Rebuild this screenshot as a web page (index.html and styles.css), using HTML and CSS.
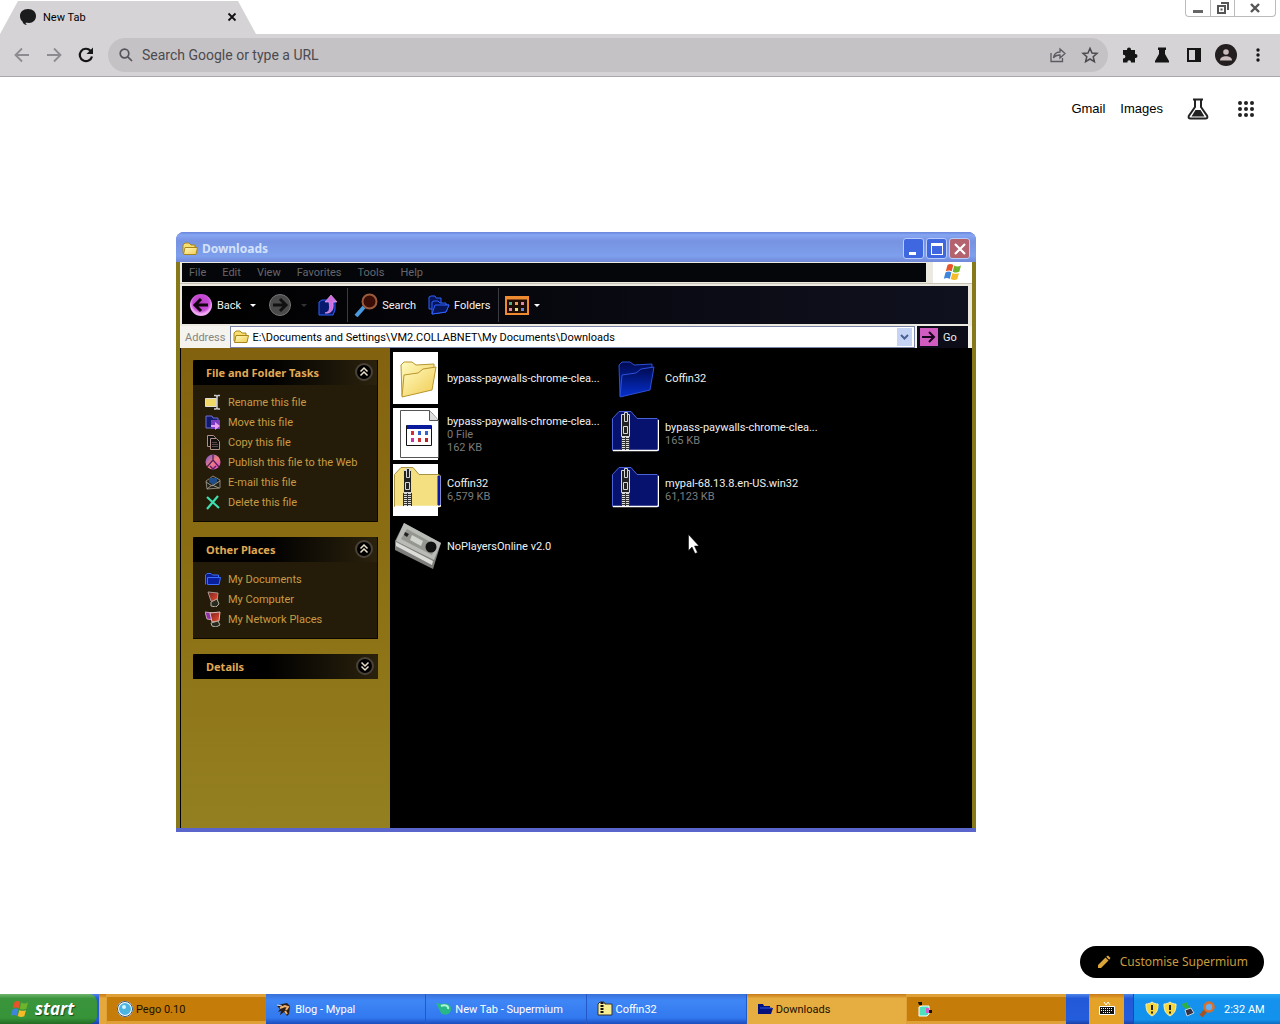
FILE: index.html
```html
<!DOCTYPE html>
<html lang="en">
<head>
<meta charset="utf-8">
<title>New Tab - Supermium</title>
<link rel="stylesheet" href="styles.css">
</head>
<body>
<svg class="defs" aria-hidden="true">
  <defs>
    <linearGradient id="gYellow" x1="0" y1="0" x2="1" y2="1"><stop offset="0" stop-color="#fffbc0"/><stop offset="1" stop-color="#f0ca50"/></linearGradient>
    <linearGradient id="gBlue" x1="0" y1="0" x2="0" y2="1"><stop offset="0" stop-color="#000a50"/><stop offset="1" stop-color="#0630d0"/></linearGradient>
    <radialGradient id="gPink" cx=".5" cy=".4"><stop offset="0" stop-color="#b93ac4"/><stop offset=".75" stop-color="#c84cd6"/><stop offset="1" stop-color="#f0a8f4"/></radialGradient>
    <linearGradient id="gWeb" x1="0" y1="0" x2="1" y2="1"><stop offset="0" stop-color="#6a50d8"/><stop offset=".5" stop-color="#f08080"/><stop offset="1" stop-color="#e040e0"/></linearGradient>
    <linearGradient id="gRed" x1="0" y1="0" x2="1" y2="1"><stop offset="0" stop-color="#7a2020"/><stop offset="1" stop-color="#f05030"/></linearGradient>
  </defs>
  <symbol id="flag" viewBox="0 0 20 20">
    <path fill="#e8532a" d="M4.500 3C6.500 1.600 8.500 1.800 10.300 3L8.700 9.300C7 8.200 5 8.200 2.800 9.300z"/>
    <path fill="#6fb52c" d="M11.300 3.500C13.500 4.700 15.500 4.700 18 3.400L16.300 9.800C14 11 11.800 10.800 9.700 9.700z"/>
    <path fill="#3e86dc" d="M2.500 10.400C4.500 9.300 6.700 9.300 8.400 10.500L6.700 17C5 15.800 3 15.700 .8 16.800z"/>
    <path fill="#f6bc28" d="M9.400 10.900C11.500 12.100 13.700 12.200 16 11L14.300 17.300C12 18.500 9.800 18.300 7.700 17.100z"/>
  </symbol>
  <symbol id="folderS" viewBox="0 0 16 16">
    <path d="M1 12V4l2-2h4l2 2h4v4z" fill="#f8e070" stroke="#a8861c"/>
    <path d="M1.500 13.500L3 6.500h12.500l-1.500 7z" fill="url(#gYellow)" stroke="#a8861c"/>
  </symbol>
  <symbol id="folderB" viewBox="0 0 16 16">
    <path d="M.5 13.500V4L2 2.500h4L7.500 4h6v2" fill="#0a1c90" stroke="#3c6cff"/>
    <path d="M2.500 13.500V6.500h13l-1.500 7z" fill="#0a1f9c" stroke="#3c6cff"/>
  </symbol>
  <symbol id="folderBig" viewBox="0 0 48 48">
    <path d="M8 11l3-3h8l4 3 18-1v6L38 34 9 42z"/>
    <path d="M11 21l14-2 5-4 13-2-4 23L9 43z"/>
  </symbol>
  <symbol id="zip" viewBox="-1 0 48 48">
    <path d="M.5 40.500V8.500L7 1.500h12L25 8.500h20l2 2v30z"/>
    <path d="M1 40.500h44l1.500-1V10" fill="none" stroke="#fff" stroke-width="1.500"/>
    <g fill="#222" stroke="#d8d8d8"><path d="M9.500 4.500h8v22h-8z"/><path d="M12.500 2.500h3v9h-3zM11.500 16.500h4v7h-4z"/></g>
    <path d="M9 27h9v13H9z" fill="#333" stroke="none"/>
    <path d="M11.500 27v13M15.500 27v13" stroke="#ddd" stroke-width="3" stroke-dasharray="1 1"/>
  </symbol>
  <symbol id="up2" viewBox="0 0 18 18"><circle cx="9" cy="9" r="8" fill="#000" stroke="#4a4238" stroke-width="2"/><path d="M5.500 8.500L9 5l3.500 3.500M5.500 12.500L9 9l3.500 3.500" fill="none" stroke="#eadfca" stroke-width="1.500"/></symbol>
  <symbol id="shield" viewBox="0 0 14 16"><path d="M7 1c2 1.500 4 2 6 2 0 6-1 9-6 12C2 12 1 9 1 3c2 0 4-.5 6-2z" fill="#f5d63c" stroke="#f8f0b0"/><path d="M7 4v5M7 10.500v2" stroke="#222" stroke-width="2"/></symbol>
</svg>

<div class="desktop">
  <header class="tabstrip">
    <div class="tab">
      <svg width="18" height="18" viewBox="0 0 18 18"><path d="M9 1c5 0 8 3 8 7s-3 7-7 7c-1.500 0-3-.3-3.500 0 .3 1 .8 1.600 1.500 2C5.500 17 4 15.500 3.500 13.500 2 12.500 1 10.500 1 8c0-4 3-7 8-7z" fill="#1b1a1c"/></svg>
      <span class="tab-title">New Tab</span>
      <button class="plain" aria-label="Close tab"><svg width="10" height="10" viewBox="0 0 10 10"><path d="M1.500 1.500l7 7M8.500 1.500l-7 7" stroke="#111" stroke-width="1.800"/></svg></button>
    </div>
    <div class="wincontrols">
      <button aria-label="Minimise"><svg width="12" height="12" viewBox="0 0 12 12"><path d="M1 8h10v3H1z" fill="#666"/></svg></button>
      <button aria-label="Restore"><svg width="12" height="12" viewBox="0 0 12 12" fill="none" stroke="#555" stroke-width="2"><path d="M1 4h7v7H1zM4 1h7v7M3.500 7.500h2"/></svg></button>
      <button aria-label="Close"><svg width="12" height="12" viewBox="0 0 12 12"><path d="M2 2l8 8M10 2l-8 8" stroke="#555" stroke-width="2.400"/></svg></button>
    </div>
  </header>

  <nav class="toolbar" aria-label="Browser">
    <div class="tools">
      <button class="plain" aria-label="Back"><svg width="18" height="18" viewBox="0 0 18 18" fill="none" stroke="#8d8b8f" stroke-width="1.800"><path d="M16 9H3M9 2.500L2.500 9 9 15.500"/></svg></button>
      <button class="plain" aria-label="Forward"><svg width="18" height="18" viewBox="0 0 18 18" fill="none" stroke="#8d8b8f" stroke-width="1.800"><path d="M2 9h13M9 2.500L15.500 9 9 15.500"/></svg></button>
      <button class="plain" aria-label="Reload"><svg width="18" height="18" viewBox="0 0 18 18"><path d="M15 10.500A6.200 6.200 0 1 1 13.500 4.700L15 6.300" fill="none" stroke="#151515" stroke-width="2.200"/><path d="M16 1.500V8H9.500z" fill="#151515"/></svg></button>
    </div>
    <div class="omnibox">
      <svg width="16" height="16" viewBox="0 0 16 16" fill="none" stroke="#55545a" stroke-width="1.700"><circle cx="6.500" cy="6.500" r="4.300"/><path d="M9.800 9.800L14 14"/></svg>
      <input type="text" aria-label="Address" placeholder="Search Google or type a URL">
      <button class="plain" aria-label="Share"><svg width="18" height="18" viewBox="0 0 18 18" fill="none" stroke="#5c5a60" stroke-width="1.300"><path d="M2 7v8.500h11.500V12M4.500 12c.5-4 3-6 6.500-6V3l5 4.500-5 4.500V9C8.500 9 6 9.500 4.500 12z"/></svg></button>
      <button class="plain" aria-label="Bookmark"><svg width="18" height="18" viewBox="0 0 18 18" fill="none" stroke="#4d4b50" stroke-width="1.500"><path d="M9 2.300l2 4.700 5 .4-3.800 3.300 1.200 5L9 13l-4.400 2.700 1.200-5L2 7.400 7 7z"/></svg></button>
    </div>
    <div class="tools">
      <button class="plain" aria-label="Extensions"><svg width="18" height="18" viewBox="0 0 18 18" fill="#151515"><path d="M6 3.500a2 2 0 0 1 4 0V4h4v4h.5a2 2 0 0 1 0 4H14v4.500h-4V16a1.800 1.800 0 0 0-3.600 0v.5H2v-4h.5a1.900 1.900 0 0 0 0-3.800H2V4h4z"/></svg></button>
      <button class="plain" aria-label="Labs"><svg width="18" height="18" viewBox="0 0 18 18" fill="#151515"><path d="M5 1.500h8V4h-1v4l4 7v1.500H2V15l4-7V4H5z"/></svg></button>
      <button class="plain" aria-label="Side panel"><svg width="18" height="18" viewBox="0 0 18 18" fill="#151515"><path fill-rule="evenodd" d="M2 2h14v14H2zm2 2v10h6V4z"/></svg></button>
      <button class="plain" aria-label="Profile"><svg width="22" height="22" viewBox="0 0 22 22"><circle cx="11" cy="11" r="11" fill="#231f20"/><circle cx="11" cy="8" r="2.800" fill="#c9bcbc"/><path d="M5 16.500c0-3 3-4.300 6-4.300s6 1.300 6 4.300z" fill="#c9bcbc"/></svg></button>
      <button class="plain" aria-label="Menu"><svg width="18" height="18" viewBox="0 0 18 18" fill="#151515"><circle cx="9" cy="4" r="1.700"/><circle cx="9" cy="9" r="1.700"/><circle cx="9" cy="14" r="1.700"/></svg></button>
    </div>
  </nav>

  <main class="newtab">
    <div class="google">
      <a href="#">Gmail</a>
      <a href="#">Images</a>
      <button class="plain big" aria-label="Search Labs"><svg width="22" height="22" viewBox="0 0 22 22"><path d="M6 1.500h10M8 1.500v7.500L1.800 18q-.8 2.500 1.700 2.500h15q2.500 0 1.700-2.500L14 9V1.500" fill="none" stroke="#222" stroke-width="2"/><path d="M8.500 12h5l4 6.500h-13z" fill="#222"/></svg></button>
      <button class="plain big" aria-label="Google apps"><svg width="18" height="18" viewBox="0 0 18 18" fill="#222"><circle cx="3" cy="3" r="2"/><circle cx="9" cy="3" r="2"/><circle cx="15" cy="3" r="2"/><circle cx="3" cy="9" r="2"/><circle cx="9" cy="9" r="2"/><circle cx="15" cy="9" r="2"/><circle cx="3" cy="15" r="2"/><circle cx="9" cy="15" r="2"/><circle cx="15" cy="15" r="2"/></svg></button>
    </div>
    <button class="customise"><svg width="16" height="16" viewBox="0 0 16 16" fill="#dba53c"><path d="M2 14v-3l7.500-7.500 3 3L5 14zM10.200 2.800L12 1.500 14.500 4l-1.300 1.800z"/></svg>Customise Supermium</button>
  </main>

  <section class="explorer" aria-label="Downloads">
    <div class="titlebar">
      <svg width="16" height="16"><use href="#folderS"/></svg>
      <h1>Downloads</h1>
      <button class="cap" aria-label="Minimise"><svg width="18" height="18" viewBox="0 0 18 18"><path d="M4 12h7v3H4z" fill="#fff"/></svg></button>
      <button class="cap" aria-label="Maximise"><svg width="18" height="18" viewBox="0 0 18 18"><path fill-rule="evenodd" fill="#fff" d="M3 3h12v12H3zm1 3v8h10V6z"/></svg></button>
      <button class="cap close" aria-label="Close"><svg width="18" height="18" viewBox="0 0 18 18"><path d="M4 4l10 10M14 4L4 14" stroke="#fff" stroke-width="2.200"/></svg></button>
    </div>
    <div class="frame">
      <div class="menurow">
        <div class="menubar">
          <button>File</button><button>Edit</button><button>View</button><button>Favorites</button><button>Tools</button><button>Help</button>
        </div>
        <div class="throbber"><svg width="20" height="20"><use href="#flag"/></svg></div>
      </div>
      <div class="xtools">
        <button><svg width="24" height="24" viewBox="0 0 24 24"><circle cx="12" cy="12" r="11" fill="url(#gPink)"/><path d="M19 12H7M12 6l-6 6 6 6" fill="none" stroke="#10040f" stroke-width="3"/></svg>Back<svg class="caret" width="6" height="3" viewBox="0 0 6 3"><path d="M0 0h6L3 3z" fill="#fff"/></svg></button>
        <button class="fwd" aria-label="Forward"><svg width="24" height="24" viewBox="0 0 24 24"><circle cx="12" cy="12" r="10.500" fill="#4a4a4a" stroke="#777"/><path d="M5 12h12M12 6l6 6-6 6" fill="none" stroke="#111" stroke-width="3"/></svg><svg class="caret" width="6" height="3" viewBox="0 0 6 3"><path d="M0 0h6L3 3z" fill="#333"/></svg></button>
        <button class="up" aria-label="Up"><svg width="22" height="24" viewBox="0 0 22 24"><path d="M2 22V9l3-2h5l2 2h6v8l-2 5z" fill="#081a70" stroke="#2e62ff"/><path d="M8 20c5-1 5-5 4-11H8l6-7 6 7h-4c1 7-1 12-8 11z" fill="#d070e0" stroke="#f0b0f4" stroke-width=".6"/></svg></button>
        <button class="sep"><svg width="24" height="24" viewBox="0 0 24 24"><path d="M2 23l8-9" stroke="#4a9ae0" stroke-width="4"/><circle cx="15.500" cy="8.500" r="7" fill="#3a0e06" stroke="#9a5a3c" stroke-width="2"/></svg>Search</button>
        <button class="folders"><svg width="22" height="22" viewBox="0 0 22 22" fill="#06145a" stroke="#2e62ff"><path d="M1 15V3l2-1h4l1 2h5v11z"/><path d="M4 20V8l2-1h4l2 2h6v2h3l-3 7z"/><path d="M4 20l3-9h14l-3 7z"/></svg>Folders</button>
        <button class="sep views" aria-label="Views"><svg width="24" height="20" viewBox="0 0 24 20"><path d="M1 2h22v17H1z" fill="#1c0c04" stroke="#f08a30" stroke-width="2"/><path d="M1 3h22" stroke="#f08a30" stroke-width="3"/><g fill="#d8a"><path d="M4 7h3v3H4z" fill="#5a8"/><path d="M10 7h3v3h-3z" fill="#e95"/><path d="M16 7h3v3h-3zM4 13h3v3H4z"/><path d="M10 13h3v3h-3z" fill="#dd8"/><path d="M16 13h3v3h-3z" fill="#68d"/></g></svg><svg class="caret" width="6" height="3" viewBox="0 0 6 3"><path d="M0 0h6L3 3z" fill="#fff"/></svg></button>
      </div>
      <div class="address">
        <label for="path">Address</label>
        <div class="field">
          <svg width="16" height="16"><use href="#folderS"/></svg>
          <input id="path" type="text" value="E:\Documents and Settings\VM2.COLLABNET\My Documents\Downloads">
          <button class="drop" aria-label="Show addresses"><svg width="9" height="6" viewBox="0 0 9 6"><path d="M1 1l3.500 3.500L8 1" fill="none" stroke="#4a6296" stroke-width="2"/></svg></button>
        </div>
        <button class="go"><svg width="18" height="18" viewBox="0 0 18 18"><path d="M0 0h18v18H0z" fill="#d05cc0"/><path d="M2 9h12M9 4l5 5-5 5" fill="none" stroke="#16041a" stroke-width="2"/></svg>Go</button>
      </div>
      <div class="panes">
        <aside class="side">
          <section class="panel">
            <header><h2>File and Folder Tasks</h2><svg width="18" height="18"><use href="#up2"/></svg></header>
            <ul>
              <li><svg width="16" height="16" viewBox="0 0 16 16"><path d="M.5 4.500h11v8H.5z" fill="#f0d868" stroke="#ddd"/><path d="M9 1.500h2l1 1 1-1h2M12 2v12M9 15h2l1-1 1 1h2" stroke="#ccc" fill="none" stroke-width="1.500"/></svg><a href="#">Rename this file</a></li>
              <li><svg width="16" height="16" viewBox="0 0 16 16"><path d="M1 2h6l1 2h5v10H1z" fill="#121a70" stroke="#7070d0"/><path d="M6 6h9v9H6z" fill="#7a3cc0"/><path d="M6 11h4V8l5 4-5 4v-3H6z" fill="#e8a0f0"/></svg><a href="#">Move this file</a></li>
              <li><svg width="16" height="16" viewBox="0 0 16 16" fill="#111" stroke="#b09088"><path d="M2.500 1.500h6l2 2v9h-8z"/><path d="M5.500 4.500h6l3 3v8h-9z"/><path d="M7 8.500h5M7 10.500h6M7 12.500h6" stroke="#5a4844"/></svg><a href="#">Copy this file</a></li>
              <li><svg width="16" height="16" viewBox="0 0 16 16"><circle cx="8" cy="8" r="7.500" fill="url(#gWeb)"/><path d="M2 13l6-7 6 7M5 12l3 3 3-3M8 1v6" stroke="#56205c" fill="none" stroke-width="1.300"/></svg><a href="#">Publish this file to the Web</a></li>
              <li><svg width="16" height="16" viewBox="0 0 16 16"><path d="M1 7l7-5 7 4v8L2 15z" fill="#222018" stroke="#8a8478"/><path d="M4 4h8v4l-4 3-4-3z" fill="#1d4c88"/><path d="M1 8l6 4 8-5M2 15l5-4 7 3" stroke="#a09a88" fill="none"/></svg><a href="#">E-mail this file</a></li>
              <li><svg width="16" height="16" viewBox="0 0 16 16"><path d="M2 3l12 11M13 2L2 15" stroke="#3ee0b0" stroke-width="2.200"/></svg><a href="#">Delete this file</a></li>
            </ul>
          </section>
          <section class="panel">
            <header><h2>Other Places</h2><svg width="18" height="18"><use href="#up2"/></svg></header>
            <ul>
              <li><svg width="16" height="16"><use href="#folderB"/></svg><a href="#">My Documents</a></li>
              <li><svg width="16" height="16" viewBox="0 0 16 16"><path d="M3 1l10 1-1 9-6-1z" fill="url(#gRed)" stroke="#a89890"/><path d="M6 11l6-3 2 5-3 3-5-1z" fill="#292a20" stroke="#b0b0a0"/></svg><a href="#">My Computer</a></li>
              <li><svg width="16" height="16" viewBox="0 0 16 16"><path d="M0 1l8 1v7L2 8z" fill="#9030b0" stroke="#c8a0a8"/><path d="M5 2l10-1-1 9-7 1z" fill="url(#gRed)" stroke="#e0c0b8"/><path d="M6 12l7-2 2 4-4 2-4-1z" fill="#292a20" stroke="#b0b0a0"/></svg><a href="#">My Network Places</a></li>
            </ul>
          </section>
          <section class="panel">
            <header><h2>Details</h2><svg class="flip" width="18" height="18"><use href="#up2"/></svg></header>
          </section>
        </aside>
        <div class="files">
          <div class="file"><span class="thumb light"><svg class="ybig" width="48" height="48"><use href="#folderBig"/></svg></span><p>bypass-paywalls-chrome-clea...</p></div>
          <div class="file"><span class="thumb"><svg class="bbig" width="48" height="48"><use href="#folderBig"/></svg></span><p>Coffin32</p></div>
          <div class="file"><span class="thumb light"><svg width="48" height="48" viewBox="0 0 48 48"><path d="M7.500.5h29l9 10v37h-38z" fill="#fff" stroke="#555"/><path d="M36.500.5v10h9" fill="#ddd" stroke="#555"/><path d="M13.500 15.500h25v20h-25z" fill="#fff" stroke="#111"/><path d="M14 15h24v4H14z" fill="#0a1a9c"/><path d="M18 21h3v4h-3zM25 28h3v4h-3z" fill="#c33"/><path d="M25 21h3v4h-3zM32 21h3v4h-3z" fill="#36c"/><path d="M18 28h3v4h-3z" fill="#c3a"/><path d="M32 28h3v4h-3z" fill="#b22"/></svg></span><p>bypass-paywalls-chrome-clea...<small>0 File</small><small>162 KB</small></p></div>
          <div class="file"><span class="thumb"><svg class="bzip" width="48" height="48"><use href="#zip"/></svg></span><p>bypass-paywalls-chrome-clea...<small>165 KB</small></p></div>
          <div class="file"><span class="thumb light"><svg class="yzip" width="48" height="48" viewBox="0 0 48 48"><use href="#zip"/><path d="M45 10h2v29h-2z" fill="#0a1a9c" stroke="#0a1a9c"/></svg></span><p>Coffin32<small>6,579 KB</small></p></div>
          <div class="file"><span class="thumb"><svg class="bzip" width="48" height="48"><use href="#zip"/></svg></span><p>mypal-68.13.8.en-US.win32<small>61,123 KB</small></p></div>
          <div class="file"><span class="thumb"><svg width="48" height="48" viewBox="0 0 48 48"><path d="M11 1l37 20-8 26L2 28V19z" fill="#7d7f7c"/><path d="M11 1l37 20-7 17L3 19z" fill="#b9bbb7"/><path d="M14 7l29 16-4 10L8 17z" fill="#94968f"/><path d="M3 20l37 19-1 4L3 24z" fill="#dcdcd8"/><path d="M12 10l4 2-2 3-3-2z" fill="#222"/><circle cx="38" cy="25" r="5.500" fill="#111"/><path d="M19 13l11 6-2 5-11-6z" fill="#d0d2cc"/></svg></span><p>NoPlayersOnline v2.0</p></div>
        </div>
      </div>
    </div>
  </section>

  <footer class="taskbar">
    <button class="start"><svg width="20" height="20"><use href="#flag"/></svg>start</button>
    <div class="tasks">
      <button class="task gold"><svg width="16" height="16" viewBox="0 0 16 16"><circle cx="8" cy="8" r="7" fill="#4cb4e0" stroke="#fff" stroke-width="2"/><circle cx="8" cy="8" r="7.500" fill="none" stroke="#357"/><circle cx="7" cy="6" r="2" fill="#d8f4ff"/></svg>Pego 0.10</button>
      <button class="task"><svg width="16" height="16" viewBox="0 0 16 16"><path d="M1 5l5-2 5-1 3 3-1 8-2 2-3-4-4 3 1-4-3 1 2-3z" fill="#2a1e18"/><path d="M4 7l5-2 3 1-2 3M9 10l2 3" fill="none" stroke="#f0b070" stroke-width="2"/><path d="M1 4l5 1" stroke="#ddd"/></svg>Blog - Mypal</button>
      <button class="task"><svg width="16" height="16" viewBox="0 0 16 16"><path d="M0 2l6 1c6-2 10 2 9 6-1 5-7 6-10 3z" fill="#28b888"/><path d="M5 5c4-2 8 0 7 3" stroke="#b0f4d8" stroke-width="2" fill="none"/></svg>New Tab - Supermium</button>
      <button class="task"><svg width="16" height="16" viewBox="0 0 16 16"><path d="M1 3l2-2h4l1 2h7v11H1z" fill="#f6ee90" stroke="#333"/><path d="M5 1v12" stroke="#111" stroke-width="3" stroke-dasharray="2 1"/></svg>Coffin32</button>
      <button class="task lit"><svg width="16" height="16" viewBox="0 0 16 16"><path d="M1 13V3h5l1 2h6v2h3l-2 6z" fill="#06127c"/><path d="M3 7h12" stroke="#2a58e8"/></svg>Downloads</button>
      <button class="task gold" aria-label="Untitled"><svg width="16" height="16" viewBox="0 0 16 16"><path d="M1 1h4v3H2z" fill="#111"/><path d="M2 6l3-1h7v8l-2 2H2z" fill="#50e0c0" stroke="#fff"/><path d="M9 7h3v5H9z" fill="#d060d0"/><path d="M12 9h3v3h-3z" fill="#111"/></svg></button>
    </div>
    <button class="lang" aria-label="Keyboard"><svg width="16" height="16" viewBox="0 0 16 16"><path d="M5 1l2 3 2-3 2 3" fill="none" stroke="#fff"/><path d="M.5 5.500h15v8H.5z" fill="#111" stroke="#fff"/><path d="M2 7.500h12M2 9.500h12M4 11.500h8" stroke="#fff" stroke-dasharray="1 1"/></svg></button>
    <div class="tray">
      <svg width="14" height="16"><use href="#shield"/></svg>
      <svg width="14" height="16"><use href="#shield"/></svg>
      <svg width="14" height="16" viewBox="0 0 14 16"><path d="M1 3l6-2v3l3 3-4 1-4-2z" fill="#30b040"/><path d="M4 9l6-2 3 5-7 3z" fill="#334" stroke="#c8d0d8"/></svg>
      <svg width="16" height="16" viewBox="0 0 16 16"><path d="M2 15l5-6" stroke="#a85020" stroke-width="4"/><circle cx="10" cy="6" r="4.500" fill="#6ab0f0" stroke="#d8702c" stroke-width="2.600"/></svg>
      <time>2:32 AM</time>
    </div>
  </footer>

  <svg class="cursor" width="12" height="20" viewBox="0 0 12 20"><path d="M.5.5v16l3.500-3.500 3 6.500 2.500-1-3-6.500H11z" fill="#fff" stroke="#000" stroke-width=".5"/></svg>
</div>
</body>
</html>
```
FILE: styles.css
```css
* { box-sizing: border-box; }
body { margin: 0; font: 11px/13px Roboto, "Noto Sans", sans-serif; background: #fefffe; color: #000; }
button { font: inherit; color: inherit; border: 0; padding: 0; background: none; display: flex; align-items: center; }
input { font: inherit; border: 0; padding: 0; background: none; outline: 0; min-width: 0; flex: 1; }
a { color: inherit; text-decoration: none; }
h1, h2, p, ul { margin: 0; padding: 0; }
svg { display: block; flex: none; }
.defs { position: absolute; width: 0; height: 0; }
.desktop { position: relative; min-height: 100vh; display: flex; flex-direction: column; }

/* Browser chrome */
.tabstrip { display: flex; justify-content: space-between; align-items: flex-start; height: 34px; }
.tab { width: 256px; height: 34px; padding: 0 19px; display: flex; align-items: center; background: #d5d3d6; clip-path: polygon(18px 1px, 238px 1px, 100% 100%, 0 100%); }
.tab-title { flex: 1; margin-left: 6px; }
.plain { justify-content: center; }
.wincontrols { display: flex; margin-right: 4px; border: 1px solid #bbb; border-top: 0; border-radius: 0 0 4px 4px; }
.wincontrols button { width: 24px; height: 16px; justify-content: center; }
.wincontrols button + button { border-left: 1px solid #bbb; }
.wincontrols button:last-child { width: 41px; }
.toolbar { display: flex; align-items: center; gap: 6px; height: 43px; padding: 0 6px; background: #d5d3d6; border-bottom: 1px solid #a9a7ab; }
.tools { display: flex; }
.toolbar .plain { width: 32px; height: 32px; }
.omnibox { flex: 1; display: flex; align-items: center; height: 34px; padding: 0 2px 0 10px; border-radius: 17px; background: #c4c2c5; }
.omnibox input { margin-left: 8px; font-size: 14px; }
.omnibox input::placeholder { color: #4c4a4f; opacity: 1; }

.newtab { flex: 1; display: flex; flex-direction: column; justify-content: space-between; align-items: flex-end; padding: 8px 10px 16px 0; }
.google { display: flex; align-items: center; font: 13px/16px "Liberation Sans", sans-serif; }
.google a { margin-right: 15px; }
.google .big { width: 48px; height: 48px; }
.google a + .big { margin-left: -4px; }
.customise { gap: 8px; height: 32px; padding: 0 16px; margin-right: 6px; border-radius: 16px; background: #000; color: #c99c3c; font: 12px/16px "Noto Sans", sans-serif; }

/* Explorer window */
.explorer { position: absolute; left: 176px; top: 232px; width: 800px; height: 600px; display: flex; flex-direction: column; border-radius: 8px 8px 0 0; overflow: hidden; background: #5a66cc; }
.titlebar { display: flex; align-items: center; gap: 2px; height: 30px; padding: 3px 6px 0; background: linear-gradient(#6a86dc, #86a6f2 10%, #7793e2 30%, #7d9fec 80%, #7288d8); }
.titlebar h1 { flex: 1; padding-left: 2px; font: bold 12px/16px "Noto Sans", sans-serif; color: #d3e2fa; }
.cap { width: 21px; height: 21px; justify-content: center; border: 1px solid #b9cbf8; border-radius: 3px; background: #3f68e0; }
.cap.close { background: #b4626e; }
.frame { flex: 1; display: flex; flex-direction: column; min-height: 0; margin-bottom: 4px; border: solid #87781a; border-width: 0 4px; background: #ece9e0; }
.menurow { display: flex; justify-content: space-between; height: 22px; border-bottom: 1px solid #c8c4b8; }
.menubar { flex: 1; display: flex; gap: 16px; margin: 1px 7px 1px 2px; padding-left: 7px; background: #05060a; color: #66666a; }
.throbber { width: 39px; display: flex; justify-content: center; background: #fff; }
.xtools { display: flex; align-items: center; height: 38px; margin: 2px 4px 2px 2px; padding-left: 7px; background: linear-gradient(90deg, #000, #10111f); color: #f2f2f2; }
.xtools button { height: 34px; gap: 4px; }
.xtools .caret { margin-left: 5px; }
.xtools .fwd { margin-left: 12px; }
.xtools .up { margin-left: 10px; }
.xtools .sep { margin-left: 8px; padding-left: 6px; border-left: 1px solid #3a3a40; }
.xtools .folders { margin-left: 12px; }
.xtools .views { gap: 0; }
.address { display: flex; align-items: center; height: 22px; background: #f4f3ee; }
.address label { padding: 0 5px; color: #85857f; }
.field { flex: 1; display: flex; align-items: center; gap: 3px; height: 22px; padding: 0 2px; border: 1px solid #7a83a8; background: #fff; }
.drop { width: 15px; height: 18px; justify-content: center; background: #c5d3f5; }
.go { gap: 5px; width: 51px; height: 22px; margin: 0 4px 0 2px; padding-left: 3px; background: #0c0d18; color: #eee; }
.panes { flex: 1; display: flex; background: #000; min-height: 0; }
.side { width: 210px; padding: 12px; display: flex; flex-direction: column; gap: 15px; border-left: 1px solid #000; background: linear-gradient(#83620f, #8c7014 50%, #948020); color: #c79c45; }
.panel { background: #241b08; border: solid #0c0800; border-width: 0 1px 1px 0; }
.panel:last-child { border: 0; }
.panel header { display: flex; align-items: center; justify-content: space-between; height: 25px; padding: 0 4px 2px 13px; background: linear-gradient(90deg, #000 40%, #2b220d); border-radius: 3px 3px 0 0; }
.panel h2 { padding-top: 3px; font: bold 11px/14px "Noto Sans", sans-serif; color: #e0aa55; }
.panel ul { list-style: none; padding: 7px 0 9px 12px; white-space: nowrap; }
.panel li { display: flex; align-items: center; gap: 7px; height: 20px; }
.flip { transform: rotate(180deg); }
.files { flex: 1; display: grid; grid-template-columns: 218px 218px; grid-auto-rows: 52px; align-content: start; gap: 4px 0; padding: 4px 3px; color: #f0f0f0; }
.file { display: flex; align-items: center; gap: 6px; white-space: nowrap; }
.thumb { width: 48px; height: 52px; display: flex; align-items: center; }
.light { background: linear-gradient(#fff, #fff) 0 0 / 45px 52px no-repeat; }
.file small { display: block; font-size: 11px; color: #7c7c7c; }
.ybig { fill: url(#gYellow); stroke: #b8962c; }
.bbig { fill: url(#gBlue); stroke: #2c50d8; }
.bzip { fill: #06126e; stroke: #4a62d8; }
.yzip { fill: #f4e080; stroke: #a89440; }
.cursor { position: absolute; left: 688px; top: 534px; }

/* Taskbar */
.taskbar { display: flex; height: 30px; background: linear-gradient(#4d85ea, #2259d8 15%, #245ddc 85%, #1941a5); color: #fff; }
.start { gap: 5px; width: 97px; padding-left: 10px; margin-right: 2px; border-radius: 0 8px 8px 0; background: linear-gradient(#6fb56c, #3a953c 15%, #379338 80%, #236b24); font: italic bold 17px/20px "Open Sans", sans-serif; text-shadow: 1px 1px 1px #1b4a1b; }
.tasks { flex: 1; display: flex; padding-left: 7px; margin-right: 23px; background: linear-gradient(#c87a18, #e5a83c 15%, #e5a83c); }
.task { flex: 1; gap: 3px; min-width: 0; padding: 0 10px; background: linear-gradient(#3a70d8, #3f86f5 20%, #3278f0 80%, #1c4cbc); border-right: 1px solid #2358c8; white-space: nowrap; }
.task.gold { background: #c67c08; color: #201000; border: solid #e0a038; border-width: 3px 0 3px 1px; }
.task.lit { background: linear-gradient(#c87a18, #e6ae40 15%); color: #201000; border: 0; }
.lang { width: 35px; margin-right: 9px; justify-content: center; background: linear-gradient(#c87a18, #e5a228 15%); }
.tray { display: flex; align-items: center; gap: 4px; width: 147px; padding-left: 11px; border-left: 1px solid #0c50b0; background: linear-gradient(#28a8f4, #1592ee 20%, #1292ec 85%, #0c6cc0); }
.tray time { margin-left: 5px; }
```
